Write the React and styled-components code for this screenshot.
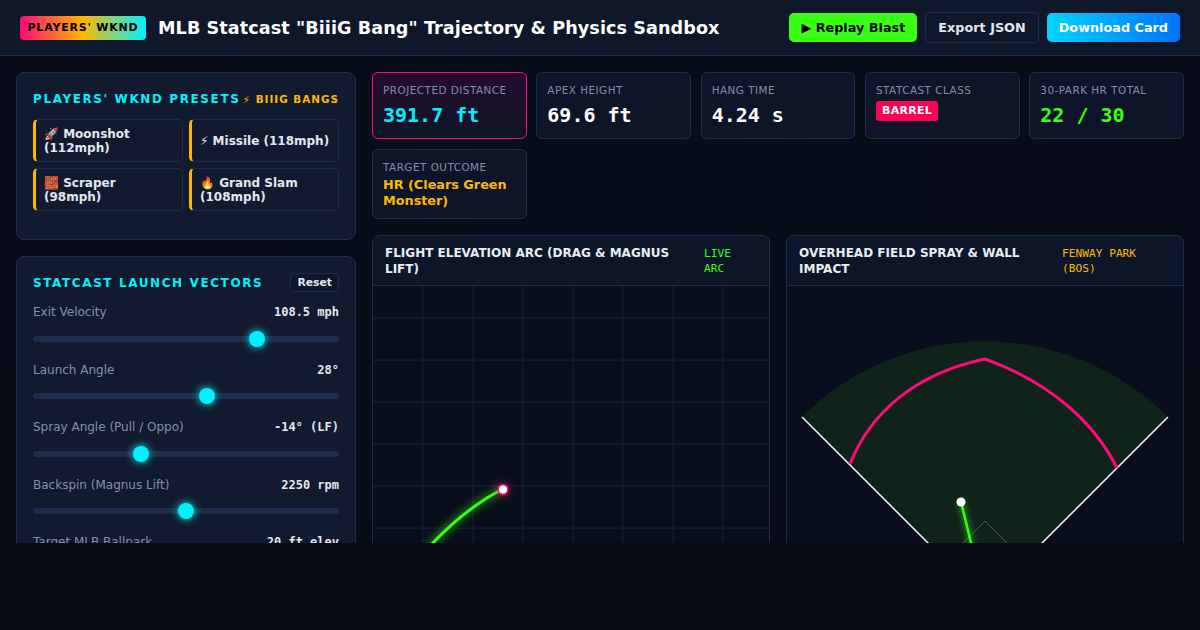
import styled, { createGlobalStyle } from 'styled-components'

const sans = '"DejaVu Sans", sans-serif'
const mono = '"DejaVu Sans Mono", monospace'

const GlobalStyle = createGlobalStyle`
  * { box-sizing: border-box; }
  html, body { margin: 0; height: 100%; background: #060b16; }
  body { font-family: ${sans}; color: #e2e8f0; }
`

const Shell = styled.div`
  height: 543px;
  overflow: hidden;
  background: radial-gradient(circle at 50% 30%, #080d1b 0%, #060b16 100%);
`

const Header = styled.header`
  height: 56px;
  padding: 0 20px;
  display: flex;
  align-items: center;
  justify-content: space-between;
  background: #0f172a;
  border-bottom: 1px solid #1e2d4a;
`

const Brand = styled.div`
  display: flex;
  align-items: center;
  gap: 12px;
`

const Logo = styled.span`
  width: 126px;
  height: 24px;
  display: flex;
  align-items: center;
  justify-content: center;
  border-radius: 4px;
  background: linear-gradient(90deg, #ff0a78, #ffb800 50%, #00f0ff);
  color: #000;
  font-size: 11px;
  font-weight: 700;
  letter-spacing: 0.8px;
  white-space: nowrap;
`

const Title = styled.h1`
  margin: 0;
  font-size: 17.6px;
  letter-spacing: 0.08px;
  font-weight: 700;
  color: #fff;
`

const Actions = styled.div`
  display: flex;
  align-items: center;
  gap: 8px;
`

const Button = styled.button`
  height: ${p => (p.$ghost ? '31px' : '29px')};
  padding: 0 12px;
  border-radius: 5px;
  border: ${p => (p.$ghost ? '1px solid #1e2d4a' : 'none')};
  background: ${p => p.$bg || '#0f172a'};
  color: ${p => p.$color || '#e2e8f0'};
  font-family: ${sans};
  font-size: 12.8px;
  font-weight: 700;
  cursor: pointer;
`

const Main = styled.main`
  display: grid;
  grid-template-columns: 340px 1fr;
  gap: 16px;
  padding: 16px;
  align-items: start;
`

const Sidebar = styled.aside`
  display: flex;
  flex-direction: column;
  gap: 16px;
`

const Panel = styled.section`
  padding: 16px;
  background: #111a2e;
  border: 1px solid #1e2d4a;
  border-radius: 8px;
`

const PanelHead = styled.div`
  display: flex;
  align-items: center;
  justify-content: space-between;
  height: 19px;
  margin-bottom: ${p => p.$gap};
`

const PanelTitle = styled.h2`
  margin: 0;
  font-size: 12px;
  font-weight: 700;
  letter-spacing: 1.6px;
  color: #00f0ff;
  white-space: nowrap;
`

const Tag = styled.span`
  font-size: 10.4px;
  font-weight: 700;
  letter-spacing: 1px;
  color: #ffb800;
  white-space: nowrap;
`

const PresetGrid = styled.div`
  display: grid;
  grid-template-columns: 1fr 1fr;
  gap: 6px;
  margin-bottom: 12px;
`

const Preset = styled.button`
  height: 43px;
  padding: 0 8px;
  text-align: left;
  background: #111a2e;
  border: 1px solid #1e2d4a;
  border-left: 3px solid #ffb800;
  border-radius: 5px;
  color: #e2e8f0;
  font-family: ${sans};
  font-size: 12px;
  line-height: 14px;
  font-weight: 700;
`

const ResetButton = styled.button`
  height: 19px;
  padding: 0 6px;
  background: #0f172a;
  border: 1px solid #1e2d4a;
  border-radius: 4px;
  color: #e2e8f0;
  font-family: ${sans};
  font-size: 10.8px;
  font-weight: 700;
`

const Control = styled.div`
  margin-bottom: 15px;
`

const ControlRow = styled.div`
  display: flex;
  justify-content: space-between;
  align-items: center;
  height: 16px;
  font-size: 12px;
  color: #8492a6;
`

const ControlValue = styled.span`
  font-family: ${mono};
  font-weight: 700;
  color: #e2e8f0;
`

const Range = styled.input.attrs({ type: 'range', min: 0, max: 1000 })`
  display: block;
  width: 100%;
  height: 16px;
  margin: 10.5px 0 0;
  appearance: none;
  background: transparent;

  &::-webkit-slider-runnable-track {
    height: 6px;
    border-radius: 3px;
    background: #1e2d4a;
  }

  &::-webkit-slider-thumb {
    appearance: none;
    width: 16px;
    height: 16px;
    margin-top: -5px;
    border-radius: 50%;
    background: #00f0ff;
    box-shadow: 0 0 8px #00f0ff;
  }
`

const Content = styled.div`
  display: flex;
  flex-direction: column;
  gap: 16px;
`

const StatGrid = styled.div`
  display: grid;
  grid-template-columns: repeat(5, 1fr);
  gap: 10px 9.6px;
`

const Stat = styled.div`
  min-height: 67px;
  padding: 10px;
  border-radius: 6px;
  border: 1px solid ${p => (p.$hot ? '#ff0a78' : '#1e2d4a')};
  background: ${p => (p.$hot ? 'linear-gradient(180deg, #260b2c, #0e1528)' : '#0e1528')};
`

const StatLabel = styled.div`
  font-size: 10.4px;
  line-height: 14px;
  letter-spacing: 0.5px;
  color: #8090a6;
  white-space: nowrap;
`

const StatValue = styled.div`
  margin-top: 6px;
  font-family: ${mono};
  font-size: 20px;
  line-height: 24px;
  font-weight: 700;
  color: ${p => p.$color || '#fff'};
`

const Badge = styled.span`
  display: inline-block;
  margin-top: 4px;
  padding: 2px 6px;
  border-radius: 3px;
  background: #ff0055;
  color: #fff;
  font-size: 11px;
  line-height: 16px;
  font-weight: 700;
  letter-spacing: 0.3px;
`

const Outcome = styled.div`
  margin: 3px 0 -1px;
  font-size: 12.8px;
  line-height: 16px;
  font-weight: 700;
  color: #ffb800;
`

const ChartGrid = styled.div`
  display: grid;
  grid-template-columns: 1fr 1fr;
  gap: 16px;
`

const Chart = styled.section`
  border: 1px solid #1e2d4a;
  border-radius: 8px;
  overflow: hidden;
  background: #0d1529;
`

const ChartHead = styled.div`
  height: 50px;
  padding: 0 12px;
  display: flex;
  align-items: center;
  justify-content: space-between;
  gap: 12px;
  border-bottom: 1px solid #1e2d4a;
`

const ChartTitle = styled.h3`
  margin: 0;
  font-size: 12px;
  line-height: 16px;
  font-weight: 700;
  color: #e8edf5;
`

const ChartTag = styled.span`
  flex: 0 0 ${p => p.$width};
  font-family: ${mono};
  font-size: 11.2px;
  line-height: 15px;
  color: ${p => p.$color};
`

const Plot = styled.svg`
  display: block;
  width: 100%;
  height: 340px;
  background: ${p => p.$bg};
`

const presets = [
  '🚀 Moonshot (112mph)',
  '⚡ Missile (118mph)',
  '🧱 Scraper (98mph)',
  '🔥 Grand Slam (108mph)',
]

const controls = [
  { label: 'Exit Velocity', value: '108.5 mph', pos: 745 },
  { label: 'Launch Angle', value: '28°', pos: 572 },
  { label: 'Spray Angle (Pull / Oppo)', value: '-14° (LF)', pos: 345 },
  { label: 'Backspin (Magnus Lift)', value: '2250 rpm', pos: 500 },
  { label: 'Target MLB Ballpark', value: '20 ft elev', pos: null },
]

const gridX = [50, 100, 150, 200, 250, 300, 350]
const gridY = [32, 74, 116, 158, 200, 242, 284]

const ElevationPlot = () => (
  <Plot $bg="#080f1b" viewBox="0 0 396 340">
    <defs>
      <filter id="arcGlow" x="-50%" y="-50%" width="200%" height="200%">
        <feGaussianBlur stdDeviation="4" />
      </filter>
    </defs>
    {gridX.map(x => <line key={x} x1={x} x2={x} y1="0" y2="340" stroke="#111b2d" strokeWidth="1.75" />)}
    {gridY.map(y => <line key={y} x1="0" x2="396" y1={y} y2={y} stroke="#111b2d" strokeWidth="1.75" />)}
    <path d="M45 273 Q88 224 130 203" fill="none" stroke="#39ff14" strokeWidth="5" opacity="0.6" filter="url(#arcGlow)" />
    <path d="M45 273 Q88 224 130 203" fill="none" stroke="#39ff14" strokeWidth="3" />
    <circle cx="130" cy="203.500" r="7" fill="#ff0a78" opacity="0.5" filter="url(#arcGlow)" />
    <circle cx="130" cy="203.500" r="4.750" fill="#fff" stroke="#ff0a78" strokeWidth="1.500" />
  </Plot>
)

const SprayPlot = () => (
  <Plot $bg="#080e1e" viewBox="0 0 396 340">
    <defs>
      <filter id="sprayGlow" x="-200%" y="-50%" width="500%" height="200%">
        <feGaussianBlur stdDeviation="3" />
      </filter>
    </defs>
    <path d="M198 314 L15 131 A259 259 0 0 1 381 131 Z" fill="#0f231a" />
    <line x1="198" y1="314" x2="15" y2="131" stroke="#f1f5f9" strokeWidth="1.5" />
    <line x1="198" y1="314" x2="381" y2="131" stroke="#f1f5f9" strokeWidth="1.5" />
    <path d="M63 178 C82 130 125 88 198 73 C265 97 308 138 330 182" fill="none" stroke="#ff0a78" strokeWidth="3" />
    <path d="M198 235 L277 314 L198 393 L119 314 Z" fill="none" stroke="#ffffff" strokeOpacity="0.25" />
    <line x1="174" y1="216" x2="198" y2="314" stroke="#39ff14" strokeWidth="5" opacity="0.5" filter="url(#sprayGlow)" />
    <line x1="174" y1="216" x2="198" y2="314" stroke="#39ff14" strokeWidth="2.5" />
    <circle cx="174" cy="216" r="4.500" fill="#fff" />
  </Plot>
)

export default function App() {
  return (
    <Shell>
      <GlobalStyle />
      <Header>
        <Brand>
          <Logo>PLAYERS' WKND</Logo>
          <Title>MLB Statcast "BiiiG Bang" Trajectory &amp; Physics Sandbox</Title>
        </Brand>
        <Actions>
          <Button $bg="#39ff14" $color="#000">▶ Replay Blast</Button>
          <Button $ghost>Export JSON</Button>
          <Button $bg="linear-gradient(90deg, #00d4ff, #0072ff)" $color="#fff">Download Card</Button>
        </Actions>
      </Header>
      <Main>
        <Sidebar>
          <Panel>
            <PanelHead $gap="11px">
              <PanelTitle>PLAYERS' WKND PRESETS</PanelTitle>
              <Tag>⚡ BIIIG BANGS</Tag>
            </PanelHead>
            <PresetGrid>
              {presets.map(name => <Preset key={name}>{name}</Preset>)}
            </PresetGrid>
          </Panel>
          <Panel>
            <PanelHead $gap="12px">
              <PanelTitle>STATCAST LAUNCH VECTORS</PanelTitle>
              <ResetButton>Reset</ResetButton>
            </PanelHead>
            {controls.map(c => (
              <Control key={c.label}>
                <ControlRow>
                  <span>{c.label}</span>
                  <ControlValue>{c.value}</ControlValue>
                </ControlRow>
                {c.pos !== null && <Range defaultValue={c.pos} />}
              </Control>
            ))}
          </Panel>
        </Sidebar>
        <Content>
          <StatGrid>
            <Stat $hot>
              <StatLabel>PROJECTED DISTANCE</StatLabel>
              <StatValue $color="#00f0ff">391.7 ft</StatValue>
            </Stat>
            <Stat>
              <StatLabel>APEX HEIGHT</StatLabel>
              <StatValue>69.6 ft</StatValue>
            </Stat>
            <Stat>
              <StatLabel>HANG TIME</StatLabel>
              <StatValue>4.24 s</StatValue>
            </Stat>
            <Stat>
              <StatLabel>STATCAST CLASS</StatLabel>
              <Badge>BARREL</Badge>
            </Stat>
            <Stat>
              <StatLabel>30-PARK HR TOTAL</StatLabel>
              <StatValue $color="#39ff14">22 / 30</StatValue>
            </Stat>
            <Stat>
              <StatLabel>TARGET OUTCOME</StatLabel>
              <Outcome>HR (Clears Green Monster)</Outcome>
            </Stat>
          </StatGrid>
          <ChartGrid>
            <Chart>
              <ChartHead>
                <ChartTitle>FLIGHT ELEVATION ARC (DRAG &amp; MAGNUS LIFT)</ChartTitle>
                <ChartTag $color="#39ff14" $width="53px">LIVE ARC</ChartTag>
              </ChartHead>
              <ElevationPlot />
            </Chart>
            <Chart>
              <ChartHead>
                <ChartTitle>OVERHEAD FIELD SPRAY &amp; WALL IMPACT</ChartTitle>
                <ChartTag $color="#ffb800" $width="109px">FENWAY PARK (BOS)</ChartTag>
              </ChartHead>
              <SprayPlot />
            </Chart>
          </ChartGrid>
        </Content>
      </Main>
    </Shell>
  )
}
